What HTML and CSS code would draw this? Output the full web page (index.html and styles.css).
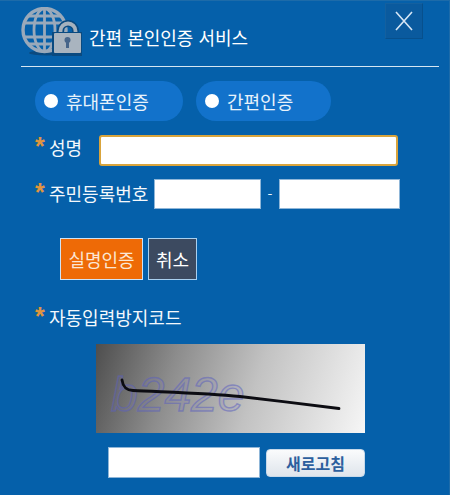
FILE: index.html
```html
<!DOCTYPE html>
<html lang="ko">
<head>
<meta charset="utf-8">
<title>간편 본인인증 서비스</title>
<link rel="stylesheet" href="styles.css">
</head>
<body>
<div class="dialog">
  <header class="head">
    <svg class="logo" width="62" height="50" viewBox="0 0 62 50" aria-hidden="true">
      <ellipse cx="26" cy="46" rx="18" ry="2.4" fill="#0a4a80"/>
      <g fill="none" stroke="#9aa9ba" stroke-width="2.8">
        <circle cx="23.500" cy="23" r="21.500" stroke-width="3.4"/>
        <ellipse cx="23.500" cy="23" rx="10.500" ry="21.500"/>
        <path d="M23.500 2V44M3 16H45M3 30H40M8 9H40M8 37H34"/>
      </g>
      <path d="M39.500 27V24a7.500 7.500 0 0 1 15 0V27" fill="none" stroke="#0a4a80" stroke-width="7"/>
      <path d="M39.500 27V24a7.500 7.500 0 0 1 15 0V27" fill="none" stroke="#a5b1bd" stroke-width="3.8"/>
      <rect x="31" y="25" width="30" height="24" fill="#0a4a80"/>
      <rect x="33" y="26" width="27" height="20" rx="1" fill="#a9b4bf"/>
      <circle cx="46.500" cy="33" r="3" fill="#46658a"/>
      <rect x="45" y="34" width="3" height="7" fill="#46658a"/>
    </svg>
    <h1 class="title">간편 본인인증 서비스</h1>
    <button class="close" type="button" aria-label="닫기">
      <svg width="18" height="20" viewBox="0 0 18 20"><path d="M1 1L17 19M17 1L1 19" stroke="#d6e6f5" stroke-width="1.6" fill="none"/></svg>
    </button>
  </header>
  <div class="tabs">
    <label class="pill pill-phone"><span class="dot"></span>휴대폰인증</label>
    <label class="pill pill-easy"><span class="dot"></span>간편인증</label>
  </div>
  <div class="row row-name">
    <span class="label"><i class="star">*</i>성명</span>
    <span class="focus-input"></span>
  </div>
  <div class="row row-id">
    <span class="label"><i class="star">*</i>주민등록번호</span>
    <span class="box box-id1"></span>
    <span class="dash">-</span>
    <span class="box box-id2"></span>
  </div>
  <div class="actions">
    <button class="btn btn-ok" type="button">실명인증</button>
    <button class="btn btn-cancel" type="button">취소</button>
  </div>
  <div class="label label-captcha"><i class="star">*</i>자동입력방지코드</div>
  <div class="captcha">
    <span class="captcha-text">b242e</span>
    <svg class="captcha-line" width="269" height="89" viewBox="0 0 269 89" aria-hidden="true">
      <path d="M26 36C27 43 30 46 37 46.500C65 48 110 49 144 52.500C175 56 215 61 243 64.500" fill="none" stroke="#0c0c12" stroke-width="2.800" stroke-linecap="round"/>
    </svg>
  </div>
  <div class="refresh-row">
    <span class="box box-code"></span>
    <button class="refresh" type="button">새로고침</button>
  </div>
</div>
</body>
</html>
```
FILE: styles.css
```css
html, body {
  margin: 0;
  padding: 0;
}
body {
  width: 450px;
  height: 495px;
  overflow: hidden;
  background: #0560aa;
  font-family: "Noto Sans CJK KR", "Noto Sans", sans-serif;
  color: #fff;
}
.dialog {
  box-sizing: border-box;
  width: 450px;
  height: 495px;
  border-top: 1px solid #1d6ba9;
  border-right: 1px solid #1d6ba9;
  padding-left: 21px;
}
.head {
  display: flex;
  align-items: flex-start;
  width: 418px;
  height: 65px;
  border-bottom: 1px solid #d5e6f3;
}
.logo {
  margin-top: 6px;
  flex: none;
}
.title {
  margin: 23px 0 0 6px;
  font-size: 18px;
  line-height: 26px;
  font-weight: 400;
  flex: 1;
}
.close {
  flex: none;
  box-sizing: border-box;
  width: 38px;
  height: 36px;
  margin: 2px 16px 0 0;
  padding: 0;
  display: flex;
  align-items: center;
  justify-content: center;
  background: #0a5a9e;
  border: 1px solid #14609f;
  border-right-color: #07508d;
  border-bottom-color: #07508d;
}
.tabs {
  display: flex;
  gap: 13px;
  margin: 14px 0 0 14px;
}
.pill {
  height: 40px;
  display: flex;
  align-items: center;
  border-radius: 20px;
  background: #1272cb;
  font-size: 18px;
  padding-left: 9px;
  box-sizing: border-box;
  color: #e8f2fb;
}
.pill-phone { width: 148px; }
.pill-easy { width: 135px; }
.dot {
  width: 14px;
  height: 14px;
  border-radius: 50%;
  background: #fff;
  margin-right: 8px;
  flex: none;
}
.row {
  display: flex;
  align-items: center;
}
.row-name {
  margin: 14px 0 0 14px;
  height: 31px;
}
.row-id {
  margin: 13px 0 0 14px;
  height: 30px;
}
.label {
  font-size: 18px;
  line-height: 24px;
  color: #f4f8fc;
  display: flex;
  align-items: center;
}
.row-name .label {
  width: 64px;
  flex: none;
  height: 24px;
  margin-top: -8px;
}
.row-id .label {
  width: 119px;
  flex: none;
  margin-top: -3px;
}
.star {
  width: 14px;
  flex: none;
  font-style: normal;
  font-weight: 700;
  font-size: 25px;
  line-height: 24px;
  color: #e0953f;
  font-family: "Liberation Sans", sans-serif;
  position: relative;
  top: -1px;
}
.focus-input {
  box-sizing: border-box;
  width: 299px;
  height: 31px;
  background: #fff;
  border: 2px solid #d9a43c;
  border-radius: 3px;
}
.box {
  display: block;
  box-sizing: border-box;
  background: #fff;
  border: 1px solid #8fb6d8;
  height: 30px;
}
.box-id1 { width: 107px; }
.box-id2 { width: 121px; }
.dash {
  width: 18px;
  text-align: center;
  font-size: 14px;
  line-height: 20px;
  color: #e8f2fb;
}
.actions {
  display: flex;
  gap: 5px;
  margin: 29px 0 0 39px;
}
.btn {
  box-sizing: border-box;
  height: 42px;
  padding: 0;
  border: 1px solid #cfe3f5;
  color: #fff;
  font-family: inherit;
  font-size: 18px;
}
.btn-ok {
  width: 83px;
  background: #ee6a06;
  color: #fbe6d4;
}
.btn-cancel {
  width: 49px;
  background: #3c4a60;
  border-color: #a9d0ef;
}
.label-captcha {
  margin: 25px 0 0 14px;
}
.captcha {
  position: relative;
  overflow: hidden;
  width: 269px;
  height: 89px;
  margin: 15px 0 0 75px;
  background: linear-gradient(108deg, #4e4e4e 0%, #8c8c8c 28%, #c2c2c2 58%, #f6f6f6 100%);
}
.captcha-text {
  position: absolute;
  left: 15px;
  top: 27px;
  font-family: "Liberation Sans", sans-serif;
  font-size: 48px;
  line-height: 48px;
  font-style: italic;
  color: rgba(120, 120, 200, 0.15);
  -webkit-text-stroke: 1.4px rgba(90, 95, 190, 0.5);
}
.captcha-line {
  position: absolute;
  left: 0;
  top: 0;
}
.refresh-row {
  display: flex;
  align-items: center;
  margin: 14px 0 0 87px;
}
.box-code {
  width: 152px;
  height: 31px;
}
.refresh {
  box-sizing: border-box;
  width: 99px;
  height: 28px;
  margin-left: 6px;
  padding: 0;
  border: 1px solid #c7d9ea;
  border-radius: 4px;
  background: linear-gradient(#fafbfc, #dfe5ec);
  color: #2c5f9e;
  font-family: inherit;
  font-size: 16px;
  font-weight: 700;
}
```
